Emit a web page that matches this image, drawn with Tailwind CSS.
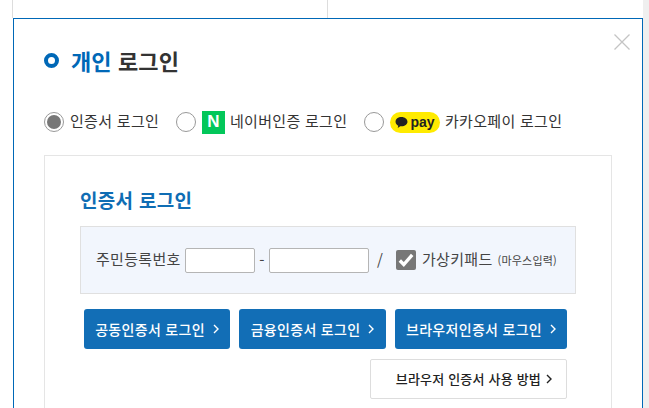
<!DOCTYPE html>
<html lang="ko">
<head>
  <meta charset="UTF-8">
  <title>개인 로그인</title>
  <script src="https://cdn.jsdelivr.net/npm/@tailwindcss/browser@4"></script>
</head>
<body class="h-[408px] overflow-hidden bg-white font-['Noto_Sans_CJK_KR','Noto_Sans',sans-serif] text-[#333]">
  <div class="flex h-[408px]">
    <div class="w-[643px] shrink-0">
      <!-- page behind the modal -->
      <div class="ml-3 flex h-[18px] w-[316px] border-x border-[#ddd]"></div>

      <!-- Modal -->
      <div class="relative ml-[13px] h-[400px] w-[630px] border-x border-t border-[#0068b7] pl-[30px] pr-[30px]">
        <button class="absolute right-[12px] top-[15px] text-[#c4c4c4]">
          <svg class="h-4 w-4" viewBox="0 0 16 16" fill="none" stroke="currentColor" stroke-width="1.3"><path d="M0.5 0.5l15 15M15.5 0.5l-15 15"/></svg>
        </button>

        <h2 class="mt-[26px] flex h-[30px] items-center text-[22px] font-bold leading-[30px] tracking-[0.1px]">
          <span class="mr-[12px] h-[15px] w-[15px] rounded-full border-[4px] border-[#0068b7]"></span>
          <span class="text-[#0068b7]">개인&nbsp;</span>로그인
        </h2>

        <!-- Login type -->
        <div class="mt-[35px] flex h-6 items-center text-[15px] tracking-[0.3px]">
          <span class="flex h-5 w-5 items-center justify-center rounded-full border border-[#999]"><span class="h-[14px] w-[14px] rounded-full bg-[#777]"></span></span>
          <span class="ml-[6px] w-[88px] whitespace-nowrap pb-[2px]">인증서 로그인</span>
          <span class="ml-[18px] h-5 w-5 rounded-full border border-[#999]"></span>
          <span class="ml-[6px] flex h-[23px] w-[23px] items-center justify-center bg-[#03c75a] font-['Liberation_Sans',sans-serif] text-[17px] font-bold text-white">N</span>
          <span class="ml-[5px] w-[116px] whitespace-nowrap pb-[2px]">네이버인증 로그인</span>
          <span class="ml-[18px] h-5 w-5 rounded-full border border-[#999]"></span>
          <span class="ml-[6px] flex h-[21px] w-[50px] items-center justify-center gap-[2px] rounded-full bg-[#ffeb00] font-['Liberation_Sans',sans-serif] text-[14px] font-bold tracking-normal text-[#222]">
            <svg class="h-[13px] w-[13px]" viewBox="0 0 12 12" fill="#222"><path d="M6 1C2.900 1 0.500 2.900 0.500 5.300c0 1.500 1 2.800 2.500 3.600L2.500 11l2.400-1.600c.4.100.7.100 1.100.100 3.100 0 5.500-1.900 5.500-4.200S9.100 1 6 1z"/></svg>
            pay
          </span>
          <span class="ml-[5px] whitespace-nowrap pb-[2px]">카카오페이 로그인</span>
        </div>

        <!-- Certificate login panel -->
        <div class="mt-[21px] h-[260px] w-[568px] border border-[#e5e5e5] pl-[35px] pr-[35px]">
          <h3 class="mt-[30px] h-[28px] text-[19px] font-bold leading-[28px] tracking-[0.3px] text-[#0f6db4]">인증서 로그인</h3>
          <div class="mt-[12px] flex h-[68px] w-[496px] items-center border border-[#e0e0e0] bg-[#f2f6fd] pl-[15px] text-[15px] tracking-[0.3px] text-[#444]">
            <span class="w-[89px] whitespace-nowrap pb-[2px]">주민등록번호</span>
            <span class="h-[25px] w-[70px] rounded-[2px] border border-[#b5b5b5] bg-white"></span>
            <span class="w-[14px] text-center">-</span>
            <span class="h-[25px] w-[100px] rounded-[2px] border border-[#b5b5b5] bg-white"></span>
            <span class="ml-[1px] w-[20px] text-center">/</span>
            <span class="ml-[6px] flex h-5 w-5 items-center justify-center rounded-[2px] bg-[#777]">
              <svg class="h-[18px] w-[18px]" viewBox="0 0 16 16" fill="none" stroke="#fff" stroke-width="3"><path d="M2.500 8.500l3.500 3.500 7.500-8.500"/></svg>
            </span>
            <span class="ml-[6px] whitespace-nowrap pb-[2px]">가상키패드</span>
            <span class="ml-[5px] whitespace-nowrap text-[11px] tracking-[0.2px]">(마우스입력)</span>
          </div>
          <div class="ml-[4px] mt-[15px] flex gap-[9px] text-[14px] font-medium tracking-[0.3px] text-white">
            <a class="flex h-10 w-[146px] items-center justify-center gap-2 rounded-[3px] bg-[#126eb6]">공동인증서 로그인 <svg class="h-[10px] w-[6px]" viewBox="0 0 6 10" fill="none" stroke="#fff" stroke-width="1.4"><path d="M1 1l4 4-4 4"/></svg></a>
            <a class="flex h-10 w-[147px] items-center justify-center gap-2 rounded-[3px] bg-[#126eb6]">금융인증서 로그인 <svg class="h-[10px] w-[6px]" viewBox="0 0 6 10" fill="none" stroke="#fff" stroke-width="1.4"><path d="M1 1l4 4-4 4"/></svg></a>
            <a class="flex h-10 w-[172px] items-center justify-center gap-2 rounded-[3px] bg-[#126eb6]">브라우저인증서 로그인 <svg class="h-[10px] w-[6px]" viewBox="0 0 6 10" fill="none" stroke="#fff" stroke-width="1.4"><path d="M1 1l4 4-4 4"/></svg></a>
          </div>
          <div class="mt-[10px] flex w-[487px] justify-end">
            <a class="flex h-10 w-[197px] items-center justify-end gap-[5px] rounded-[2px] border border-[#ddd] pr-[14px] text-[13px] font-medium tracking-[0.2px] text-[#222]">브라우저 인증서 사용 방법 <svg class="h-[10px] w-[6px]" viewBox="0 0 6 10" fill="none" stroke="#222" stroke-width="1.4"><path d="M1 1l4 4-4 4"/></svg></a>
          </div>
        </div>
      </div>
    </div>
    <!-- scrollbar -->
    <div class="h-full w-[6px] bg-[#efefef]"></div>
  </div>
</body>
</html>
